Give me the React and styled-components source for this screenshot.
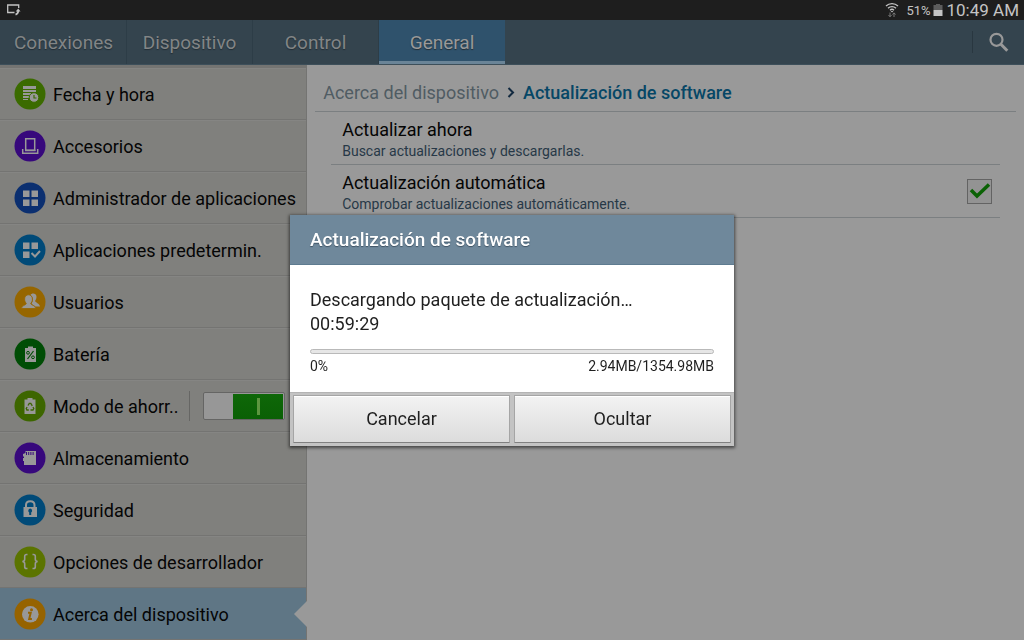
import React, { useState } from "react";
import styled, { createGlobalStyle, css } from "styled-components";

const Global = createGlobalStyle`
  *, *::before, *::after { box-sizing: border-box; }
  html, body, #root { height: 100%; }
  body { margin: 0; background: #999999; font-family: Roboto, "Liberation Sans", sans-serif; overflow: hidden; }
  h1, h2, h3, p, ul { margin: 0; padding: 0; font-weight: 400; }
  button { font-family: inherit; }
`;

const Screen = styled.div`
  display: flex;
  flex-direction: column;
  min-height: 100%;
`;

const StatusBar = styled.header`
  display: flex;
  align-items: center;
  height: 20px;
  padding: 0 5px 0 7px;
  background: #1e1e1e;
  color: #c4c4c4;
`;

const StatusIcons = styled.div`
  display: flex;
  align-items: center;
  margin-left: auto;
`;

const BatteryLevel = styled.span`
  margin: 1px 2px 0 7px;
  font-size: 13px;
  line-height: 20px;
`;

const Clock = styled.time`
  margin-left: 4px;
  font-size: 17px;
  line-height: 20px;
`;

const TabBar = styled.nav`
  display: flex;
  align-items: stretch;
  height: 45px;
  padding-left: 1px;
  background: #34444e;
  border-bottom: 1px solid #3d4f5a;
`;

const Tab = styled.button`
  width: 126px;
  padding: 1px 0 0;
  border: 0;
  border-right: 1px solid #2d3d47;
  background: transparent;
  color: #828586;
  font-size: 19px;
  line-height: 24px;
  text-shadow: 0 1px 1px #222e36;
  ${(p) =>
    p.$active &&
    css`
      background: #2f526c;
      border-right: 0;
      border-bottom: 3px solid #6a8497;
      padding-top: 4px;
      color: #999999;
    `}
`;

const SearchButton = styled.button`
  display: grid;
  place-items: center;
  width: 52px;
  height: 22px;
  margin: 11px 0 0 auto;
  padding: 0;
  border: 0;
  border-left: 1px solid #293740;
  background: transparent;
`;

const Body = styled.div`
  display: flex;
  flex: 1;
`;

const Sidebar = styled.ul`
  flex: 0 0 30%;
  min-width: 0;
  padding-top: 3px;
  list-style: none;
  background: #80807d;
  border-right: 1px solid #747472;
  box-shadow: inset 0 3px #747472;
`;

const Item = styled.li`
  position: relative;
  display: flex;
  align-items: center;
  height: 52px;
  padding-left: 14px;
  padding-right: 21px;
  border-bottom: 1px solid #747472;
  box-shadow: inset 0 1px #858583;
  ${(p) =>
    p.$active &&
    css`
      background: #5f7685;
      box-shadow: none;
      &::after {
        content: "";
        position: absolute;
        right: -1px;
        top: 50%;
        margin-top: -13px;
        border: 13px solid transparent;
        border-left-width: 0;
        border-right-color: #999999;
      }
    `}
`;

const ItemLink = styled.a`
  display: flex;
  align-items: center;
  gap: 7px;
  color: #050505;
  font-size: 18px;
  line-height: 24px;
  text-decoration: none;
  white-space: nowrap;
`;

const ItemLabel = styled.span`
  padding-top: 2px;
`;

const IconDisc = styled.svg`
  flex: none;
  width: 32px;
  height: 32px;
`;

const SwitchLabel = styled.label`
  display: flex;
  align-items: center;
  height: 30px;
  margin-left: auto;
  padding-left: 13px;
  border-left: 1px solid #666664;
`;

const Switch = styled.input`
  appearance: none;
  width: 82px;
  height: 28px;
  margin: 0;
  border: 1px solid #656564;
  border-radius: 2px;
  background:
    linear-gradient(#5d9640, #5d9640) 53px 5px / 3px 17px no-repeat,
    linear-gradient(#0e6708, #0a6005) 29px 1px / 50px 25px no-repeat,
    #979797;
`;

const Content = styled.main`
  flex: 1;
  min-width: 0;
  padding: 0 8px;
  background: #999999;
`;

const Breadcrumb = styled.nav`
  display: flex;
  align-items: center;
  height: 47px;
  padding: 10px 8px 0;
  border-bottom: 1px solid #7b7f81;
  font-size: 18px;
  line-height: 24px;
`;

const Crumb = styled.a`
  color: #505c63;
  text-decoration: none;
`;

const CurrentCrumb = styled.h1`
  color: #064766;
  font-size: 18px;
  font-weight: 500;
`;

const Chevron = styled.svg`
  width: 8px;
  height: 12px;
  margin: 0 8px;
`;

const Setting = styled.label`
  display: flex;
  align-items: center;
  justify-content: space-between;
  height: 53px;
  margin: 0 16px;
  padding: 0 8px 0 11px;
  border-bottom: 1px solid #7b7f81;
`;

const SettingText = styled.span`
  padding-top: 3px;
`;

const SettingTitle = styled.span`
  display: block;
  color: #050505;
  font-size: 18px;
  line-height: 22px;
`;

const SettingHint = styled.span`
  display: block;
  color: #273847;
  font-size: 14px;
  line-height: 20px;
`;

const TickBox = styled.span`
  display: grid;
  width: 25px;
  height: 25px;
  & > * { grid-area: 1 / 1; }
`;

const TickInput = styled.input`
  appearance: none;
  width: 25px;
  height: 25px;
  margin: 0;
  border: 1px solid #636363;
  background: #939393;
`;

const DialogLayer = styled.div`
  position: fixed;
  inset: 0;
  display: grid;
  place-items: center;
  padding-top: 20px;
`;

const Dialog = styled.section`
  width: 444px;
  background: #ffffff;
  box-shadow: 0 1px 3px 1px rgba(0, 0, 0, 0.55);
`;

const DialogTitle = styled.h2`
  height: 50px;
  padding: 0 20px;
  background: #6f889b;
  border-bottom: 1px solid #5e7b90;
  color: #ffffff;
  font-size: 19px;
  font-weight: 500;
  line-height: 50px;
  text-shadow: 0 1px 1px #3f5364;
`;

const DialogBody = styled.div`
  padding: 23px 20px 16px;
  color: #1f1f1f;
  font-size: 18px;
  line-height: 24px;
`;

const Track = styled.div`
  height: 5px;
  margin: 13px 0 2px;
  border: 1px solid #b9b9b9;
  border-radius: 3px;
  background: #e6e6e6;
`;

const Figures = styled.div`
  display: flex;
  justify-content: space-between;
  font-size: 14px;
  line-height: 20px;
`;

const Actions = styled.div`
  display: flex;
  gap: 4px;
  padding: 2px 3px 3px;
  background: #c3c3c3;
  border-top: 1px solid #b4b4b4;
`;

const Action = styled.button`
  flex: 1;
  height: 48px;
  padding: 0;
  border: 1px solid #a5a5a5;
  border-bottom-color: #808080;
  border-radius: 1px;
  background: linear-gradient(#f3f3f3, #dcdcdc);
  box-shadow: inset 0 1px #ffffff;
  color: #1f1f1f;
  font-size: 18px;
`;

const ink = "#989898";

const glyphs = {
  date: (
    <>
      <path fill={ink} d="M9 8h13v3H9zM9 12h13v2H9zM9 15h9v2H9zM9 18h6v2H9zM9 21h5v1H9z" />
      <circle cx="20" cy="19.500" r="4.800" fill={ink} stroke="#3b6b00" />
      <path d="M20 17v3h2.500" fill="none" stroke="#3b6b00" strokeWidth="1.200" />
    </>
  ),
  dock: (
    <>
      <path fill="none" stroke={ink} strokeWidth="1.500" d="M11.700 8.700h9v11.500h-9z" />
      <path fill="none" stroke={ink} strokeWidth="1.500" d="M8.700 19v4.200h15V19" />
      <path stroke={ink} strokeWidth="1.500" d="M11 20.500h10.500" />
    </>
  ),
  grid: <path fill={ink} d="M9 8.500h6.500V15H9zM17.500 8.500H24V15h-6.500zM9 17.500h6.500V24H9zM17.500 17.500H24V24h-6.500z" />,
  gridCheck: (
    <>
      <path fill={ink} d="M9 8.500h6.500V15H9zM17.500 8.500H24V15h-6.500zM9 17.500h6.500V24H9z" />
      <path fill="none" stroke={ink} strokeWidth="2" d="m17.500 19 3.500 3.500 5-5.500" />
    </>
  ),
  users: (
    <>
      <path fill={ink} d="M16.500 9c1.200-2.500 6-2 6 1.800 0 2-.8 3-1.400 4.200.2 1.500 4.400 2.500 4.900 5.500h-5c-1-1.500-3-1.800-3.400-3 1.800-2.500 2-6-1.100-8.500z" />
      <path fill={ink} stroke="#966600" strokeWidth=".800" d="M7.500 22.500c0-3.500 4.800-3 4.800-5.200-1.200-1.200-1.700-2.500-1.700-4.300 0-5.600 7.800-5.600 7.800 0 0 1.800-.5 3.100-1.700 4.300 0 2.200 5 1.700 5 5.200z" />
    </>
  ),
  battery: (
    <>
      <path fill={ink} d="M14 8.500h5v1.500h3V24H11V10h3z" />
      <path stroke="#004d05" strokeWidth="1.200" d="m19.500 13-6 8" />
      <circle cx="14" cy="14.800" r="1.400" fill="none" stroke="#004d05" />
      <circle cx="19" cy="19.300" r="1.400" fill="none" stroke="#004d05" />
    </>
  ),
  saver: (
    <>
      <path fill={ink} d="M13.500 8h5v1.500h3V24H10.500V9.500h3z" />
      <path fill="none" stroke="#3d6600" strokeWidth="1.300" d="m14 15.500 1.300-2.200h1.500l1.500 2.500M19 17l.8 1.500-.8 1.500h-2.500M14.800 20h-1.900l-.7-1.400.9-1.600" />
    </>
  ),
  card: (
    <>
      <path fill={ink} d="M11.500 9H22v14H10v-4H9v-3h1v-1.500H9V12l2.500-1z" />
      <path stroke="#37087c" d="M12.500 10v3M14.700 10v3M16.900 10v3M19.100 10v3" />
    </>
  ),
  lock: (
    <>
      <path fill="none" stroke={ink} strokeWidth="2" d="M12 14.500V11c0-5 8.500-5 8.500 0v3.500" />
      <path fill={ink} d="M9.500 13H23v10H9.500z" />
      <path fill="#004a78" d="M16.200 14.500a2.200 2.200 0 0 1 1 4V21h-2v-2.500a2.200 2.200 0 0 1 1-4z" />
    </>
  ),
  braces: (
    <path
      fill="none"
      stroke={ink}
      strokeWidth="1.600"
      d="M13.500 8.500h-1c-1.300 0-1.800.6-1.800 1.800v3c0 1.200-.7 2-2.300 2.200 1.600.2 2.300 1 2.300 2.200v3c0 1.200.5 1.800 1.800 1.800h1M18.500 8.500h1c1.300 0 1.800.6 1.800 1.800v3c0 1.200.7 2 2.300 2.200-1.600.2-2.300 1-2.300 2.200v3c0 1.200-.5 1.800-1.800 1.800h-1"
    />
  ),
  info: (
    <>
      <circle cx="16.300" cy="16.300" r="8.300" fill={ink} />
      <circle cx="17.500" cy="11.700" r="1.500" fill="#966300" />
      <path fill="none" stroke="#966300" strokeWidth="2" d="M14 14.800h2.700l-1.500 6.200h2.700" />
    </>
  ),
};

const items = [
  { label: "Fecha y hora", icon: "date", color: "#3b6b00" },
  { label: "Accesorios", icon: "dock", color: "#37087c" },
  { label: "Administrador de aplicaciones", icon: "grid", color: "#0b2f70" },
  { label: "Aplicaciones predetermin.", icon: "gridCheck", color: "#004a78" },
  { label: "Usuarios", icon: "users", color: "#966600" },
  { label: "Batería", icon: "battery", color: "#004d05" },
  { label: "Modo de ahorr..", icon: "saver", color: "#3d6600", toggle: true },
  { label: "Almacenamiento", icon: "card", color: "#37087c" },
  { label: "Seguridad", icon: "lock", color: "#004a78" },
  { label: "Opciones de desarrollador", icon: "braces", color: "#5b7400" },
  { label: "Acerca del dispositivo", icon: "info", color: "#966300", active: true },
];

const tabs = ["Conexiones", "Dispositivo", "Control", "General"];

function SidebarItem({ label, icon, color, toggle, active }) {
  const [on, setOn] = useState(true);
  return (
    <Item $active={active}>
      <ItemLink href="#" aria-current={active ? "page" : undefined}>
        <IconDisc viewBox="0 0 32 32" aria-hidden="true">
          <circle cx="16" cy="16" r="15.500" fill={color} />
          {glyphs[icon]}
        </IconDisc>
        <ItemLabel>{label}</ItemLabel>
      </ItemLink>
      {toggle && (
        <SwitchLabel>
          <Switch type="checkbox" role="switch" aria-label={label} checked={on} onChange={() => setOn(!on)} />
        </SwitchLabel>
      )}
    </Item>
  );
}

export default function App() {
  const [auto, setAuto] = useState(true);
  return (
    <>
      <Global />
      <Screen>
        <StatusBar>
          <svg width="14" height="12" viewBox="0 0 14 12" aria-hidden="true">
            <path d="M7.500 8.500H.700V1h11v3" fill="none" stroke="#c4c4c4" strokeWidth="1.300" />
            <path d="M11.200 7c0 2-.7 3-2.700 3.600" fill="none" stroke="#c4c4c4" strokeWidth="1.800" />
            <path d="m8.700 7.500 2.500-3 2.300 3z" fill="#c4c4c4" />
          </svg>
          <StatusIcons>
            <svg width="14" height="16" viewBox="0 0 14 16" aria-hidden="true">
              <path d="M1 4c3.300-3.300 8.700-3.300 12 0M3 6.200c2.200-2.200 5.800-2.200 8 0M5 8.200c1.200-1.200 2.800-1.200 4 0" fill="none" stroke="#c4c4c4" strokeWidth="1.300" />
              <path d="m5.700 9 1.300 1.400L8.300 9z" fill="#c4c4c4" />
              <path d="M5 10.500v4M3.500 13 5 14.800 6.500 13M9 15v-4M7.500 12.500 9 10.800l1.500 1.700" fill="none" stroke="#777777" />
            </svg>
            <BatteryLevel>51%</BatteryLevel>
            <svg width="10" height="14" viewBox="0 0 10 14" aria-hidden="true">
              <path d="M3 1h4v1h2.500v5h-9V2H3z" fill="#5c5c5c" />
              <path d="M.5 7h9v6h-9z" fill="#c4c4c4" />
            </svg>
            <Clock>10:49 AM</Clock>
          </StatusIcons>
        </StatusBar>
        <TabBar>
          {tabs.map((name) => (
            <Tab key={name} type="button" $active={name === "General"}>
              {name}
            </Tab>
          ))}
          <SearchButton type="button" aria-label="Buscar">
            <svg width="20" height="20" viewBox="0 0 20 20" aria-hidden="true">
              <circle cx="7.500" cy="7.800" r="6" fill="none" stroke="#999999" strokeWidth="2.200" />
              <path d="m11.700 12 6.600 6.800" stroke="#999999" strokeWidth="3" />
            </svg>
          </SearchButton>
        </TabBar>
        <Body>
          <Sidebar>
            {items.map((item) => (
              <SidebarItem key={item.label} {...item} />
            ))}
          </Sidebar>
          <Content>
            <Breadcrumb>
              <Crumb href="#">Acerca del dispositivo</Crumb>
              <Chevron viewBox="0 0 8 12" aria-hidden="true">
                <path d="m1.500 1 4.500 4.500L1.500 10" fill="none" stroke="#12293f" strokeWidth="2" />
              </Chevron>
              <CurrentCrumb>Actualización de software</CurrentCrumb>
            </Breadcrumb>
            <Setting as="div">
              <SettingText>
                <SettingTitle>Actualizar ahora</SettingTitle>
                <SettingHint>Buscar actualizaciones y descargarlas.</SettingHint>
              </SettingText>
            </Setting>
            <Setting>
              <SettingText>
                <SettingTitle>Actualización automática</SettingTitle>
                <SettingHint>Comprobar actualizaciones automáticamente.</SettingHint>
              </SettingText>
              <TickBox>
                <TickInput type="checkbox" checked={auto} onChange={() => setAuto(!auto)} />
                {auto && (
                  <svg width="25" height="25" viewBox="0 0 25 25" pointerEvents="none" aria-hidden="true">
                    <path d="m4 11 6 6L22 5.500" fill="none" stroke="#0b6205" strokeWidth="3.500" />
                  </svg>
                )}
              </TickBox>
            </Setting>
          </Content>
        </Body>
      </Screen>
      <DialogLayer>
        <Dialog role="dialog" aria-labelledby="dialog-title">
          <DialogTitle id="dialog-title">Actualización de software</DialogTitle>
          <DialogBody>
            <p>Descargando paquete de actualización…</p>
            <p>00:59:29</p>
            <Track role="progressbar" aria-valuenow={0} aria-valuemin={0} aria-valuemax={100} aria-label="Descarga" />
            <Figures>
              <span>0%</span>
              <span>2.94MB/1354.98MB</span>
            </Figures>
          </DialogBody>
          <Actions>
            <Action type="button">Cancelar</Action>
            <Action type="button">Ocultar</Action>
          </Actions>
        </Dialog>
      </DialogLayer>
    </>
  );
}
